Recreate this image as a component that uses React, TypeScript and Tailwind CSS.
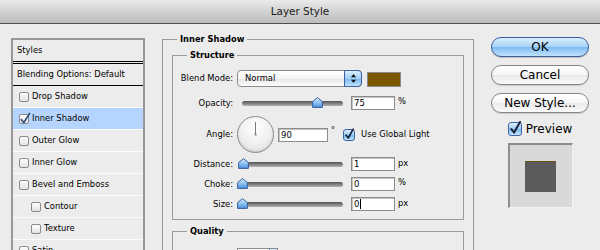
import React from "react";

function SmallCheck({ checked }: { checked?: boolean }) {
  return (
    <div className="relative w-[10px] h-[10px] shrink-0 rounded-[2px] border border-[#8b8b8b] bg-[linear-gradient(to_bottom,#ffffff,#e2e2e2)]">
      {checked && (
        <svg className="absolute left-[-1px] top-[-3px] overflow-visible" width="12" height="13" viewBox="0 0 12 13">
          <path d="M2.3 7.6 L4.8 10.6 L10.6 1.4" fill="none" stroke="#2b4878" strokeWidth="1.6" strokeLinecap="round" strokeLinejoin="round" />
        </svg>
      )}
    </div>
  );
}

function AquaCheck({ cls }: { cls: string }) {
  return (
    <div className={"relative shrink-0 rounded-[3px] border border-[#3d64a3] bg-[linear-gradient(to_bottom,#dcefff,#9fcdf5_50%,#79b6ec_52%,#c4e5ff)] " + cls}>
      <svg className="absolute left-0 top-0 w-full h-full overflow-visible" viewBox="0 0 14 14">
        <path d="M2.8 7.2 L6 11.2 L12.8 -1.2" fill="none" stroke="#1b2740" strokeWidth="2.4" strokeLinecap="round" strokeLinejoin="round" />
      </svg>
    </div>
  );
}

function Slider({ pct }: { pct: number }) {
  return (
    <div className="relative flex items-center w-[106px] h-[14px] pl-[5px]">
      <div className="h-[5px] flex-1 rounded-full bg-[linear-gradient(to_bottom,#545454,#868686_55%,#b3b3b3)]" />
      <svg className="absolute top-[1px]" style={{ left: 5 + pct * 101 - 5.5 }} width="11" height="11" viewBox="0 0 11 11">
        <defs>
          <linearGradient id="thumbg" x1="0" y1="0" x2="0" y2="1">
            <stop offset="0" stopColor="#d6ecff" />
            <stop offset="0.5" stopColor="#8fc3f2" />
            <stop offset="1" stopColor="#4d8fdc" />
          </linearGradient>
        </defs>
        <path d="M5.5 0.6 L10.4 4.6 L10.4 10.4 L0.6 10.4 L0.6 4.6 Z" fill="url(#thumbg)" stroke="#3a5f9c" strokeWidth="1" strokeLinejoin="round" />
      </svg>
    </div>
  );
}

function Field({ value, cls, caret }: { value: string; cls: string; caret?: boolean }) {
  return (
    <div className={"h-[14px] shrink-0 border border-[#8c8c8c] bg-white shadow-[inset_1px_1px_0_#c4c4c4] text-[8.5px] leading-[12px] pl-[2px] flex items-center " + cls}>
      <span>{value}</span>
      {caret && <span className="ml-[1px] w-[1px] h-[10px] bg-black" />}
    </div>
  );
}

function Legend({ children }: { children: React.ReactNode }) {
  return <legend className="ml-[14px] px-[3px] text-[8.3px] font-bold leading-[11px]">{children}</legend>;
}

function Label({ children }: { children: React.ReactNode }) {
  return <div className="w-[60px] shrink-0 text-right pr-0 mr-[4px]">{children}</div>;
}

const listRows: { label: string; checked?: boolean; active?: boolean; indent?: boolean }[] = [
  { label: "Drop Shadow" },
  { label: "Inner Shadow", checked: true, active: true },
  { label: "Outer Glow" },
  { label: "Inner Glow" },
  { label: "Bevel and Emboss" },
  { label: "Contour", indent: true },
  { label: "Texture", indent: true },
  { label: "Satin" },
  { label: "Color Overlay" },
  { label: "Gradient Overlay" },
];

export default function App() {
  return (
    <div className="w-[600px] h-[250px] overflow-hidden bg-[#ececec] text-black font-['DejaVu_Sans','Liberation_Sans',sans-serif]">
      {/* Title bar */}
      <div className="h-[24px] border-b border-[#505050] bg-[linear-gradient(to_bottom,#ebebeb,#d2d2d2_50%,#bdbdbd)] flex items-center justify-center text-[10.4px] text-[#1a1a1a]">
        Layer Style
      </div>

      <div className="flex items-start">
        {/* Left list */}
        <div className="ml-[11px] mt-[14px] w-[134px] shrink-0 border-2 border-b-0 border-[#979797] text-[8.4px]">
          <div className="h-[24px] border-b-[3px] border-double border-black flex items-center pl-[4px]">Styles</div>
          <div className="h-[22px] border-b border-black flex items-center pl-[4px]">Blending Options: Default</div>
          {listRows.map((r) => (
            <div
              key={r.label}
              className={
                "h-[22px] border-b border-[#fbfbfb] flex items-center gap-[3px] " +
                (r.indent ? "pl-[18px] " : "pl-[6px] ") +
                (r.active ? "bg-[#b5d5ff]" : "")
              }
            >
              <SmallCheck checked={r.checked} />
              <span>{r.label}</span>
            </div>
          ))}
        </div>

        {/* Middle */}
        <fieldset className="ml-[17px] mt-[10px] w-[312px] h-[260px] shrink-0 border border-[#9a9a9a] text-[8.4px]">
          <Legend>Inner Shadow</Legend>
          <fieldset className="mx-[9px] mt-[5px] border border-[#9a9a9a] pb-[8px]">
            <Legend>Structure</Legend>
            <div className="mt-[9px] flex items-center h-[17px]">
              <Label>Blend Mode:</Label>
              <div className="flex items-center w-[125px] h-[17px] rounded-[4px] border border-[#8a8a8a] bg-[linear-gradient(to_bottom,#ffffff,#f3f3f3_50%,#e6e6e6_52%,#fbfbfb)]">
                <span className="flex-1 pl-[7px]">Normal</span>
                <div className="-my-px -mr-px h-[17px] w-[18px] rounded-r-[4px] border border-[#3c61a3] bg-[linear-gradient(to_bottom,#d9eeff,#9fcdf5_50%,#7ab7ed_52%,#c2e4ff)] flex items-center justify-center">
                  <svg width="7" height="11" viewBox="0 0 7 11">
                    <path d="M3.5 1 L6 4.2 L1 4.2 Z" fill="#111" />
                    <path d="M3.5 10 L6 6.8 L1 6.8 Z" fill="#111" />
                  </svg>
                </div>
              </div>
              <div className="ml-[5px] mt-[2px] w-[34px] h-[15px] border border-[#8a8a8a] bg-[#7a5800]" />
            </div>

            <div className="mt-[9px] flex items-center h-[14px]">
              <Label>Opacity:</Label>
              <Slider pct={0.75} />
              <Field value="75" cls="ml-[8px] w-[44px]" />
              <span className="ml-[3px] -mt-[4px]">%</span>
            </div>

            <div className="mt-[6px] flex items-center h-[37px]">
              <Label>Angle:</Label>
              <div className="w-[37px] h-[37px] shrink-0 rounded-full border border-[#8c8c8c] bg-[radial-gradient(circle_at_50%_30%,#ffffff,#efefef_55%,#d6d6d6)] shadow-[inset_0_-1px_2px_rgba(0,0,0,0.12)]">
                <svg width="35" height="35" viewBox="0 0 35 35">
                  <line x1="17.5" y1="17.5" x2="17.5" y2="5" stroke="#7a7a7a" strokeWidth="1" />
                  <rect x="16.5" y="16.5" width="2" height="2" fill="#8a8a8a" />
                </svg>
              </div>
              <Field value="90" cls="ml-[4px] w-[50px]" />
              <span className="ml-[3px] -mt-[8px] text-[8px]">°</span>
              <AquaCheck cls="ml-[8px] w-[12px] h-[12px]" />
              <span className="ml-[6px]">Use Global Light</span>
            </div>

            <div className="mt-[4px] flex items-center h-[14px]">
              <Label>Distance:</Label>
              <Slider pct={0.01} />
              <Field value="1" cls="ml-[8px] w-[44px]" />
              <span className="ml-[3px] -mt-[2px]">px</span>
            </div>
            <div className="mt-[6px] flex items-center h-[14px]">
              <Label>Choke:</Label>
              <Slider pct={0} />
              <Field value="0" cls="ml-[8px] w-[44px]" />
              <span className="ml-[3px] -mt-[4px]">%</span>
            </div>
            <div className="mt-[6px] flex items-center h-[14px]">
              <Label>Size:</Label>
              <Slider pct={0} />
              <Field value="0" cls="ml-[8px] w-[44px]" caret />
              <span className="ml-[3px] -mt-[2px]">px</span>
            </div>
          </fieldset>

          <fieldset className="mx-[9px] mt-[6px] border border-[#9a9a9a] h-[60px]">
            <Legend>Quality</Legend>
            <div className="mt-[11px] flex items-center h-[30px]">
              <Label>Contour:</Label>
              <div className="flex w-[41px] h-[30px] border border-[#8c8c8c] bg-white">
                <div className="flex-1" />
                <div className="w-[8px] h-full border-l border-[#6f8fc4] bg-[linear-gradient(to_bottom,#d9eeff,#8fc3f2)]" />
              </div>
            </div>
          </fieldset>
        </fieldset>

        {/* Right column */}
        <div className="ml-[17px] mt-[13px] w-[98px] shrink-0 flex flex-col items-center">
          <div className="h-[20px] w-[98px] rounded-full border border-[#3a5d9c] bg-[linear-gradient(to_bottom,#dcefff_0%,#a8d3f8_48%,#7fbbf1_52%,#bfe3ff_100%)] shadow-[0_1px_1px_rgba(0,0,0,0.2)] flex items-center justify-center text-[12px] leading-none">
            OK
          </div>
          <div className="mt-[8px] h-[20px] w-[98px] rounded-full border border-[#868686] bg-[linear-gradient(to_bottom,#ffffff_0%,#f6f6f6_48%,#e8e8e8_52%,#fbfbfb_100%)] shadow-[0_1px_1px_rgba(0,0,0,0.15)] flex items-center justify-center text-[12px] leading-none">
            Cancel
          </div>
          <div className="mt-[8px] h-[20px] w-[98px] rounded-full border border-[#868686] bg-[linear-gradient(to_bottom,#ffffff_0%,#f6f6f6_48%,#e8e8e8_52%,#fbfbfb_100%)] shadow-[0_1px_1px_rgba(0,0,0,0.15)] flex items-center justify-center text-[12px] leading-none">
            New Style...
          </div>
          <div className="mt-[9px] h-[14px] flex items-center">
            <AquaCheck cls="w-[14px] h-[14px]" />
            <span className="ml-[4px] text-[12px] leading-none">Preview</span>
          </div>
          <div className="mt-[7px] w-[65px] h-[65px] border-t-2 border-l-2 border-[#8e8e8e] border-r border-b border-r-[#f2f2f2] border-b-[#f2f2f2] bg-[#d9d9d9] flex items-center justify-center">
            <div className="w-[31px] h-[31px] bg-[#5b5b5b] border-t border-[#6e5312]" />
          </div>
        </div>
      </div>
    </div>
  );
}
